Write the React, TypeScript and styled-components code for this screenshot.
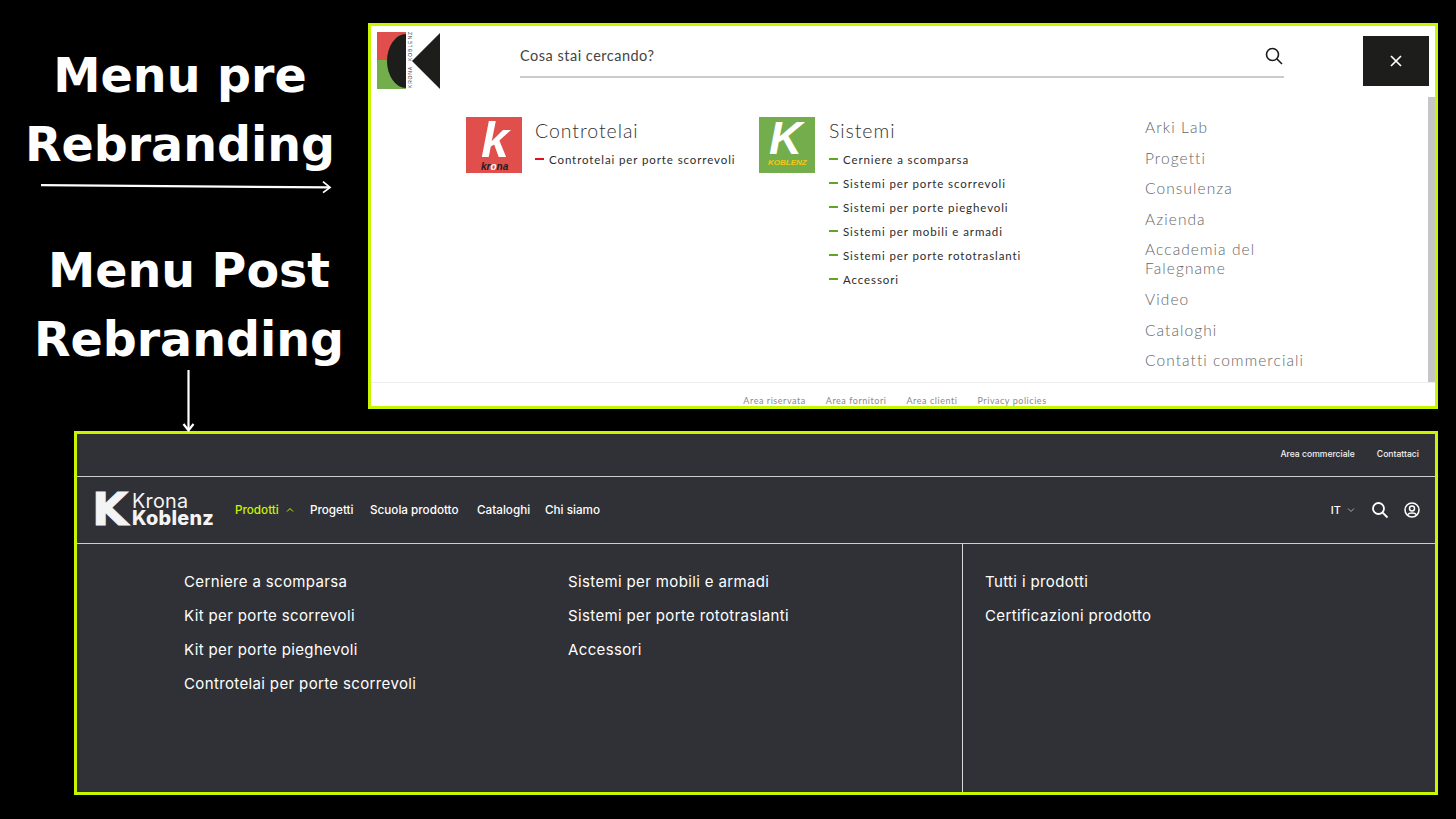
import React from "react";
import styled, { createGlobalStyle } from "styled-components";

const Global = createGlobalStyle`
  html, body { margin: 0; padding: 0; background: #000; }
  body { width: 1456px; height: 819px; overflow: hidden; font-family: "Inter", "Liberation Sans", sans-serif; }
  * { box-sizing: border-box; }
`;
const Page = styled.div`width:1456px;height:819px;background:#000;`;
const TopRow = styled.div`display:flex;height:408px;padding-top:23px;`;
const Notes = styled.div`width:368px;flex:none;padding-top:18px;`;
const Note = styled.h2<{ $shift: number }>`
  margin: 0; width: 360px; transform: translateX(${p => p.$shift}px);
  color: #fff; font: 700 47.5px/69px "DejaVu Sans", sans-serif; text-align: center;
`;
const ArrowH = styled.svg`display:block;width:368px;height:16px;margin:0;`;
const ArrowV = styled.svg`display:block;width:368px;height:62px;margin-top:-4px;`;
const Gap = styled.div<{ $h: number }>`height:${p => p.$h}px;`;

const OldPanel = styled.section`
  position:relative;width:1070px;height:386px;border:3px solid #c8f500;background:#fff;overflow:hidden;
  font-family:"Lato","Liberation Sans",sans-serif;
`;
const OldHead = styled.div`display:flex;align-items:flex-start;height:91px;`;
const OldLogo = styled.svg`width:64px;height:58px;margin:6px 0 0 6px;flex:none;`;
const SearchBar = styled.div`
  width:764px;height:52px;margin:0 0 0 79px;padding-top:19px;border-bottom:2px solid #cbcbcb;
  display:flex;justify-content:space-between;color:#444;font-size:14.5px;letter-spacing:.5px;line-height:22px;
`;
const SearchIcon = styled.svg`width:20px;height:20px;margin-top:1px;`;
const CloseBtn = styled.button`
  width:66px;height:50px;margin:10px 0 0 79px;border:0;padding:0;background:#1d1d1b;color:#fff;
  display:flex;align-items:center;justify-content:center;
`;
const Scroll = styled.div`position:absolute;right:0;top:71px;width:7px;height:285px;background:#c6c6c6;`;
const OldBody = styled.div`display:flex;height:265px;padding-left:95px;`;
const Brand = styled.div<{ $w: number; $gap: number }>`width:${p => p.$w}px;display:flex;gap:${p => p.$gap}px;flex:none;`;
const BrandTile = styled.div<{ $bg: string }>`
  position:relative;width:56px;height:56px;background:${p => p.$bg};flex:none;
`;
const TileK = styled.span<{ $sz: number; $x: number; $y: number }>`
  position:absolute;left:${p => p.$x}px;top:${p => p.$y}px;color:#fff;
  font:italic 900 ${p => p.$sz}px/.72 "Liberation Sans",sans-serif;
`;
const TileName = styled.span<{ $c: string; $x: number; $y: number; $sz: number }>`
  position:absolute;left:${p => p.$x}px;top:${p => p.$y}px;color:${p => p.$c};white-space:nowrap;
  font:italic 700 ${p => p.$sz}px/1 "Liberation Sans",sans-serif;
`;
const TileO = styled.span`color:#fff;`;
const BrandTitle = styled.h3`margin:2px 0 4px;font-weight:300;font-size:19.5px;line-height:24px;color:#333;letter-spacing:.95px;`;
const SubList = styled.ul`margin:0;padding:0;list-style:none;`;
const SubItem = styled.li<{ $c: string }>`
  display:flex;align-items:center;gap:5px;height:24px;font-size:11.5px;color:#2c2c2c;letter-spacing:.9px;white-space:nowrap;
  &::before{content:"";width:9px;height:2.500px;background:${p => p.$c};flex:none;}
`;
const Side = styled.ul`margin:1px 0 0;padding:0;list-style:none;width:172px;`;
const SideItem = styled.li<{ $tight?: boolean }>`
  font-size:15.5px;font-weight:300;line-height:19px;color:#666;letter-spacing:1.08px;margin-bottom:${p => (p.$tight ? 0 : 11.6)}px;white-space:nowrap;
`;
const OldFoot = styled.div`
  border-top:1px solid #eee;height:24px;padding-top:12px;display:flex;justify-content:center;gap:20px;
  font-size:9px;line-height:12px;color:#8a8a8a;letter-spacing:.55px;padding-right:16px;
`;

const NewPanel = styled.section`
  width:1364px;height:364px;margin:23px 0 0 74px;border:3px solid #c8f500;background:#303136;color:#fff;
  display:flex;flex-direction:column;font-family:"Inter","Liberation Sans",sans-serif;
`;
const Util = styled.div`
  height:43px;flex:none;border-bottom:1px solid #cfcfcf;display:flex;align-items:center;justify-content:flex-end;
  gap:22px;padding:0 16px 3px 0;font-size:8.600px;font-weight:500;color:#f2f2f2;
`;
const Nav = styled.nav`
  height:67px;flex:none;border-bottom:1px solid #cfcfcf;display:flex;align-items:center;padding:0 15px 0 18px;
  font-size:11.7px;font-weight:500;
`;
const LogoWrap = styled.div`position:relative;width:119px;height:34px;flex:none;margin-right:21px;`;
const LogoK = styled.span`
  position:absolute;left:-3px;top:-5px;font:900 44px/1 "DejaVu Sans",sans-serif;color:#f4f4f4;
  transform:scaleX(1.060);transform-origin:left;-webkit-text-stroke:1px #f4f4f4;
`;
const LogoLine = styled.span<{ $w: number; $y: number }>`
  position:absolute;left:37px;top:${p => p.$y}px;font:${p => p.$w} 19.8px/20px "Inter",sans-serif;color:#f4f4f4;letter-spacing:.25px;
`;
const NavLinks = styled.div`display:flex;align-items:center;flex:1;`;
const NavLink = styled.a<{ $on?: boolean; $w: number }>`
  width:${p => p.$w}px;color:${p => (p.$on ? "#c8f500" : "#fff")};display:flex;align-items:center;gap:7px;white-space:nowrap;
`;
const NavRight = styled.div`display:flex;align-items:center;`;
const Lang = styled.span`display:flex;align-items:center;gap:6px;margin-right:16px;font-size:11px;`;
const IconGap = styled.span`display:flex;margin-right:15px;`;
const Mega = styled.div`flex:1;display:flex;`;
const MegaMain = styled.div`
  width:886px;flex:none;border-right:1px solid #d8d8d8;display:flex;padding:20px 0 0 107px;
`;
const MegaCol = styled.ul<{ $w?: number }>`margin:0;padding:0;list-style:none;width:${p => (p.$w ? p.$w + "px" : "auto")};`;
const MegaItem = styled.li`height:34px;line-height:36px;font-size:15px;color:#fff;white-space:nowrap;letter-spacing:.36px;`;
const MegaSide = styled.div`padding:20px 0 0 22px;`;

const Chevron = () => (
  <svg width="8" height="6" viewBox="0 0 8 6" fill="none" stroke="#aaa" strokeWidth="1"><path d="M1 1.500 4 4.500 7 1.500" /></svg>
);

const App = () => (
  <Page>
    <Global />
    <TopRow>
      <Notes>
        <Note $shift={0}>Menu pre</Note>
        <Note $shift={0}>Rebranding</Note>
        <ArrowH viewBox="0 0 368 16" fill="none" stroke="#fff">
          <path d="M41 6.200 329 8.400" strokeWidth="2.200" />
          <path d="M323 2.600 330 8.400 323 13.600" strokeWidth="1.800" />
        </ArrowH>
        <Gap $h={41} />
        <Note $shift={9}>Menu Post</Note>
        <Note $shift={9}>Rebranding</Note>
        <ArrowV viewBox="0 0 368 62" fill="none" stroke="#fff">
          <path d="M188.500 0V60" strokeWidth="2.200" />
          <path d="M183.500 54 188.500 60.500 193.500 54" strokeWidth="2.200" />
        </ArrowV>
      </Notes>
      <OldPanel>
        <OldHead>
          <OldLogo viewBox="0 0 64 58">
            <rect x="0" y="0" width="29" height="28" fill="#e04f4c" />
            <rect x="0" y="28" width="29" height="29" fill="#74ae4c" />
            <path d="M29 2A19 27 0 0 0 29 56Z" fill="#1d1d1b" />
            <path d="M63 1V57L35 29Z" fill="#1d1d1b" />
            <text x="-56" y="34.500" transform="rotate(-90)" fontSize="5" fill="#333" fontFamily="Liberation Sans" textLength="21">KRONA</text>
            <text x="-29" y="34.500" transform="rotate(-90)" fontSize="5" fill="#333" fontFamily="Liberation Sans" textLength="29">KOBLENZ</text>
          </OldLogo>
          <SearchBar>
            <span>Cosa stai cercando?</span>
            <SearchIcon viewBox="0 0 20 20" fill="none" stroke="#1a1a1a" strokeWidth="1.600">
              <circle cx="8.500" cy="8.500" r="6" /><path d="M13 13 18 18" />
            </SearchIcon>
          </SearchBar>
          <CloseBtn aria-label="Chiudi">
            <svg width="12" height="12" viewBox="0 0 12 12" stroke="#fff" strokeWidth="1.700"><path d="M1 1 11 11M11 1 1 11" /></svg>
          </CloseBtn>
        </OldHead>
        <Scroll />
        <OldBody>
          <Brand $w={293} $gap={13}>
            <BrandTile $bg="#e04f4c">
              <TileK $sz={50} $x={15} $y={5}>k</TileK>
              <TileName $c="#1d1d1b" $x={15} $y={45} $sz={10}>kr<TileO>o</TileO>na</TileName>
            </BrandTile>
            <div>
              <BrandTitle>Controtelai</BrandTitle>
              <SubList><SubItem $c="#e3101c">Controtelai per porte scorrevoli</SubItem></SubList>
            </div>
          </Brand>
          <Brand $w={386} $gap={14}>
            <BrandTile $bg="#74ae4c">
              <TileK $sz={46} $x={10} $y={5}>K</TileK>
              <TileName $c="#f5c518" $x={9} $y={42} $sz={8}>KOBLENZ</TileName>
            </BrandTile>
            <div>
              <BrandTitle>Sistemi</BrandTitle>
              <SubList>
                {["Cerniere a scomparsa", "Sistemi per porte scorrevoli", "Sistemi per porte pieghevoli", "Sistemi per mobili e armadi", "Sistemi per porte rototraslanti", "Accessori"].map(t => (
                  <SubItem key={t} $c="#5fa81e">{t}</SubItem>
                ))}
              </SubList>
            </div>
          </Brand>
          <Side>
            {["Arki Lab", "Progetti", "Consulenza", "Azienda", "Accademia del", "Falegname", "Video", "Cataloghi", "Contatti commerciali"].map(t => (
              <SideItem key={t} $tight={t === "Accademia del"}>{t}</SideItem>
            ))}
          </Side>
        </OldBody>
        <OldFoot>
          <span>Area riservata</span><span>Area fornitori</span><span>Area clienti</span><span>Privacy policies</span>
        </OldFoot>
      </OldPanel>
    </TopRow>
    <NewPanel>
      <Util><span>Area commerciale</span><span>Contattaci</span></Util>
      <Nav>
        <LogoWrap>
          <LogoK>K</LogoK>
          <LogoLine $w={400} $y={-2}>Krona</LogoLine>
          <LogoLine $w={800} $y={15}>Koblenz</LogoLine>
        </LogoWrap>
        <NavLinks>
          <NavLink $on $w={75}>Prodotti
            <svg width="8" height="6" viewBox="0 0 8 6" fill="none" stroke="#c8f500" strokeWidth="1"><path d="M1 4.500 4 1.500 7 4.500" /></svg>
          </NavLink>
          <NavLink $w={60}>Progetti</NavLink>
          <NavLink $w={107}>Scuola prodotto</NavLink>
          <NavLink $w={68}>Cataloghi</NavLink>
          <NavLink $w={60}>Chi siamo</NavLink>
        </NavLinks>
        <NavRight>
          <Lang>IT <Chevron /></Lang>
          <IconGap>
            <svg width="18" height="18" viewBox="0 0 18 18" fill="none" stroke="#fff" strokeWidth="1.800"><circle cx="7.500" cy="7.500" r="5.500" /><path d="M11.500 11.500 16.500 16.500" /></svg>
          </IconGap>
          <svg width="16" height="16" viewBox="0 0 16 16" fill="none" stroke="#fff" strokeWidth="1.500"><circle cx="8" cy="8" r="7" /><circle cx="8" cy="6.500" r="2.500" /><path d="M3.500 12.800C5 10.500 11 10.500 12.500 12.800" /></svg>
        </NavRight>
      </Nav>
      <Mega>
        <MegaMain>
          <MegaCol $w={384}>
            {["Cerniere a scomparsa", "Kit per porte scorrevoli", "Kit per porte pieghevoli", "Controtelai per porte scorrevoli"].map(t => <MegaItem key={t}>{t}</MegaItem>)}
          </MegaCol>
          <MegaCol>
            {["Sistemi per mobili e armadi", "Sistemi per porte rototraslanti", "Accessori"].map(t => <MegaItem key={t}>{t}</MegaItem>)}
          </MegaCol>
        </MegaMain>
        <MegaSide>
          <MegaCol>
            {["Tutti i prodotti", "Certificazioni prodotto"].map(t => <MegaItem key={t}>{t}</MegaItem>)}
          </MegaCol>
        </MegaSide>
      </Mega>
    </NewPanel>
  </Page>
);

export default App;
